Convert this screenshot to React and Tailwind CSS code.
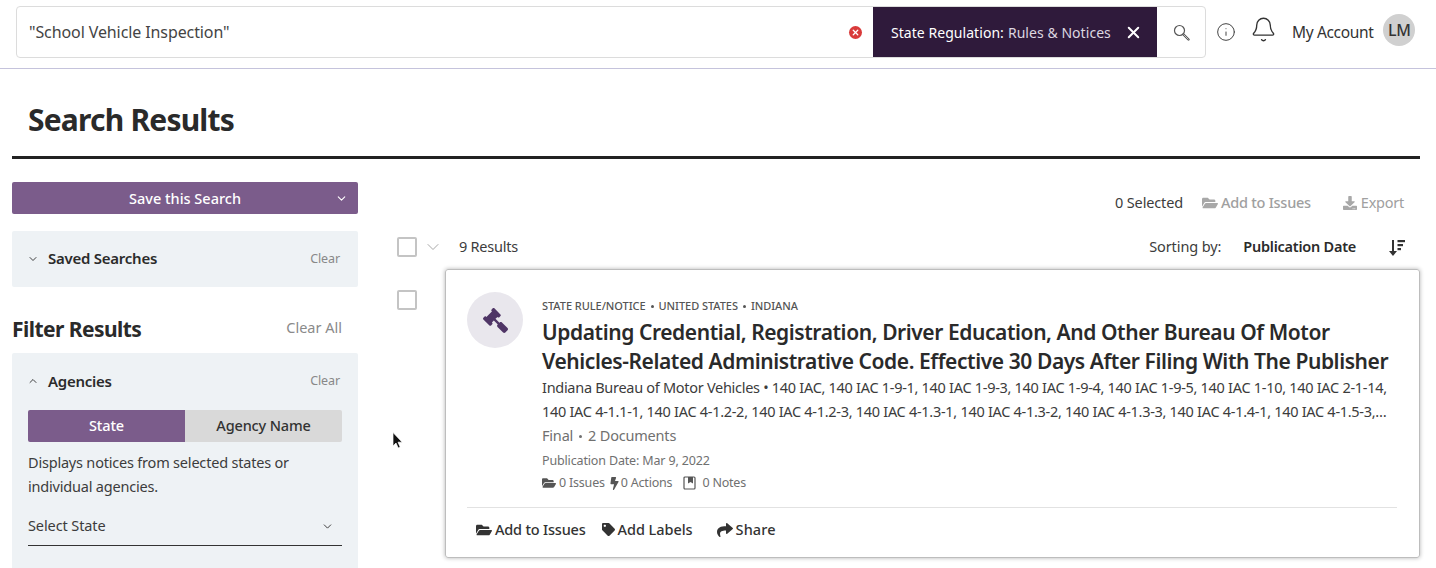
import React from "react";
import { FaFolderOpen, FaTag, FaShare, FaGavel, FaBolt, FaDownload } from "react-icons/fa";
import { ChevronDown, ChevronUp, X, Info, Bell } from "lucide-react";

function Dot() {
  return <span className="mx-[5px] inline-block h-[3px] w-[3px] rounded-full bg-[#555] align-middle" />;
}

function Check() {
  return <div className="h-[20px] w-[20px] rounded-[2px] border-2 border-[#c4c4c4] bg-white" />;
}

export default function App() {
  return (
    <div className="relative h-[568px] w-[1436px] overflow-hidden bg-white font-['Noto_Sans',sans-serif] text-[#2b2b2b]">
      <header className="flex h-[69px] items-start border-b border-[#c5c3dc] pl-4 pt-[6px]">
        <div className="flex h-[52px] w-[1190px] items-stretch overflow-hidden rounded-[4px] border border-[#dcdcdc]">
          <div className="flex flex-1 items-center pl-3 pr-[11px] text-[16px] tracking-[-0.1px] text-[#444]">
            <span className="flex-1">"School Vehicle Inspection"</span>
            <span className="flex h-[13px] w-[13px] items-center justify-center rounded-full bg-[#d93a3a]">
              <X size={9} strokeWidth={3.5} color="white" />
            </span>
          </div>
          <div className="flex w-[284px] items-center bg-[#2f1a3b] pl-[18px] text-[14px] tracking-[0.05px] text-white">
            <span>State Regulation:</span>
            <span className="ml-1 text-[#ddd6e0]">Rules &amp; Notices</span>
            <X size={19} strokeWidth={2.5} className="ml-[13px]" />
          </div>
          <div className="flex w-[48px] items-center justify-center">
            <svg width="17" height="17" viewBox="0 0 17 17" fill="none" stroke="#555">
              <circle cx="6.5" cy="6.5" r="5" strokeWidth="1.2" />
              <path d="M10.5 10.5l5 5" strokeWidth="2.4" strokeLinecap="round" />
              <path d="M10.8 10.8l4.4 4.4" stroke="#ddd" strokeWidth="0.8" strokeLinecap="round" />
            </svg>
          </div>
        </div>
        <Info size={20} strokeWidth={1.2} color="#444" className="ml-[10px] mt-[16px]" />
        <Bell size={27} strokeWidth={1.2} color="#333" className="ml-[14px] mt-[10px]" />
        <span className="ml-[15px] mt-[15px] text-[15.5px] tracking-[-0.35px] text-[#333]">My Account</span>
        <div className="ml-[10px] mt-[8px] flex h-8 w-8 items-center justify-center rounded-full bg-[#d0d0d0] text-[16px] font-medium tracking-[-0.3px] text-[#333]">LM</div>
      </header>

      <div className="pl-3 pr-4">
        <div className="border-b-[3px] border-[#222] pb-[15px] pl-4 pt-[29px]">
          <h1 className="text-[30px] font-bold leading-[43px] tracking-[-0.8px] text-[#2a2a2a]">Search Results</h1>
        </div>

        <div className="flex pt-[23px]">
          <aside className="w-[346px] shrink-0">
            <div className="relative flex h-8 items-center justify-center rounded-[2px] bg-[#7b5c8b] pt-[1px] text-[14.5px] font-medium text-white">
              Save this Search
              <ChevronDown size={13} className="absolute right-[10px]" />
            </div>
            <div className="mt-[17px] flex h-[56px] items-center rounded-[2px] bg-[#eef2f5] pb-[1px] pl-[15px] pr-[18px]">
              <ChevronDown size={12} strokeWidth={1.8} />
              <span className="ml-[9px] flex-1 text-[15px] font-semibold tracking-[-0.25px] text-[#2b2b2b]">Saved Searches</span>
              <span className="pt-[1px] text-[12.5px] tracking-[-0.1px] text-[#888]">Clear</span>
            </div>
            <div className="flex h-[66px] items-center justify-between pr-4 pt-[19px]">
              <h2 className="text-[21px] font-bold tracking-[-0.55px] text-[#2a2a2a]">Filter Results</h2>
              <span className="-mt-[4px] text-[14.5px] text-[#8a8a8a]">Clear All</span>
            </div>
            <div className="h-[300px] rounded-[2px] bg-[#eef2f5] px-4 pt-[17px]">
              <div className="flex h-[22px] items-center pr-[2px]">
                <ChevronUp size={12} strokeWidth={1.8} className="-ml-[1px]" />
                <span className="ml-[9px] flex-1 text-[15px] font-semibold tracking-[-0.25px]">Agencies</span>
                <span className="pt-[1px] text-[12.5px] tracking-[-0.1px] text-[#888]">Clear</span>
              </div>
              <div className="mt-[18px] flex h-8 overflow-hidden rounded-[2px] text-[14.5px] font-medium tracking-[-0.15px]">
                <div className="flex w-[157px] items-center justify-center bg-[#7b5c8b] text-white">State</div>
                <div className="flex flex-1 items-center justify-center bg-[#d9d9d9] text-[#333]">Agency Name</div>
              </div>
              <p className="mt-[8px] text-[14.5px] leading-6 tracking-[-0.2px] text-[#3c3c3c]">Displays notices from selected states or individual agencies.</p>
              <div className="mt-[16px] flex h-[32px] items-center justify-between border-b border-[#333] pb-[7px] pr-[8px] text-[14.5px] tracking-[-0.1px] text-[#3c3c3c]">
                Select State
                <ChevronDown size={13} strokeWidth={1.8} />
              </div>
            </div>
          </aside>

          <main className="ml-[39px] flex-1">
            <div className="mt-[11px] flex h-[20px] items-center justify-end pr-4 text-[14.5px] tracking-[-0.25px]">
              <span className="tracking-[-0.15px] text-[#3c3c3c]">0 Selected</span>
              <FaFolderOpen size={16} color="#a8a8a8" className="ml-[19px]" />
              <span className="ml-[3px] font-medium text-[#a0a0a0]">Add to Issues</span>
              <FaDownload size={14} color="#a8a8a8" className="ml-[32px]" />
              <span className="ml-[4px] text-[#a0a0a0]">Export</span>
            </div>
            <div className="mt-[21px] flex h-[26px] items-center pr-4">
              <Check />
              <ChevronDown size={20} strokeWidth={1.2} color="#a8a8a8" className="ml-[6px]" />
              <span className="ml-[16px] flex-1 text-[14.5px] tracking-[-0.25px] text-[#3c3c3c]">9 Results</span>
              <span className="text-[14.5px] tracking-[-0.1px] text-[#3c3c3c]">Sorting by:</span>
              <span className="ml-[22px] text-[14.5px] font-semibold tracking-[-0.25px] text-[#2b2b2b]">Publication Date</span>
              <svg width="16" height="17" viewBox="0 0 16 17" className="ml-[33px] mr-[-1px]" fill="#333">
                <path d="M3 1h2v11h3l-4 5-4-5h3z" />
                <rect x="8.5" y="1" width="7.5" height="2.2" />
                <rect x="8.5" y="5" width="5.5" height="2.2" />
                <rect x="8.5" y="9" width="3.5" height="2.2" />
              </svg>
            </div>
            <div className="mt-[9px] flex">
              <div className="pt-[21px]">
                <Check />
              </div>
              <article className="ml-[28px] h-[289px] flex-1 rounded-[3px] border border-[#bdbdbd] pl-[21px] pr-[22px] pt-[22px] shadow-[0_0_4px_rgba(0,0,0,0.3)]">
                <div className="flex">
                  <div className="flex h-[56px] w-[56px] shrink-0 items-center justify-center rounded-full bg-[#e9e7ed]">
                    <FaGavel size={25} color="#4f3566" className="-scale-x-100" />
                  </div>
                  <div className="ml-[19px] min-w-0 flex-1">
                    <div className="mt-[5px] flex h-[18px] items-center text-[11px] font-medium tracking-[-0.05px] text-[#555]">
                      STATE RULE/NOTICE<Dot />UNITED STATES<Dot />INDIANA
                    </div>
                    <h3 className="mt-[3px] text-[21px] font-semibold leading-[29px] tracking-[-0.42px] text-[#2a2a2a]">
                      Updating Credential, Registration, Driver Education, And Other Bureau Of Motor Vehicles-Related Administrative Code. Effective 30 Days After Filing With The Publisher
                    </h3>
                    <p className="-mt-[1px] text-[14.5px] leading-6 tracking-[-0.29px] text-[#3c3c3c]">
                      Indiana Bureau of Motor Vehicles • 140 IAC, 140 IAC 1-9-1, 140 IAC 1-9-3, 140 IAC 1-9-4, 140 IAC 1-9-5, 140 IAC 1-10, 140 IAC 2-1-14, 140 IAC 4-1.1-1, 140 IAC 4-1.2-2, 140 IAC 4-1.2-3, 140 IAC 4-1.3-1, 140 IAC 4-1.3-2, 140 IAC 4-1.3-3, 140 IAC 4-1.4-1, 140 IAC 4-1.5-3,…
                    </p>
                    <div className="mt-[1px] flex h-6 items-center text-[14.5px] tracking-[-0.2px] text-[#707070]">
                      Final<span className="mx-[6px] inline-block h-[3px] w-[3px] rounded-full bg-[#707070]" />2 Documents
                    </div>
                    <div className="mt-[1px] flex h-[24px] items-center text-[12.5px] tracking-[-0.15px] text-[#707070]">Publication Date: Mar 9, 2022</div>
                    <div className="flex h-[20px] items-center text-[12.5px] tracking-[-0.2px] text-[#707070]">
                      <FaFolderOpen size={14} color="#555" />
                      <span className="ml-[3px]">0 Issues</span>
                      <FaBolt size={13} color="#555" className="ml-[3px]" />
                      <span>0 Actions</span>
                      <svg width="13" height="14" viewBox="0 0 13 14" className="ml-[11px]" fill="none" stroke="#555" strokeWidth="1.2">
                        <rect x="1" y="1" width="11" height="12" rx="1" />
                        <path d="M5 1h5v6.5L7.5 6 5 7.5z" fill="#555" stroke="none" />
                      </svg>
                      <span className="ml-[6px]">0 Notes</span>
                    </div>
                  </div>
                </div>
                <div className="mt-[14px] flex h-[44px] items-center border-t border-[#e2e2e2] pl-[9px] text-[14.5px] font-medium tracking-[-0.2px] text-[#333]">
                  <FaFolderOpen size={16} color="#333" />
                  <span className="ml-[3px]">Add to Issues</span>
                  <FaTag size={13} color="#333" className="ml-4" />
                  <span className="ml-[3px] tracking-[-0.05px]">Add Labels</span>
                  <FaShare size={16} color="#333" className="ml-6" />
                  <span className="ml-[3px] tracking-[0.1px]">Share</span>
                </div>
              </article>
            </div>
          </main>
        </div>
      </div>

      <svg width="12" height="18" viewBox="0 0 12 18" className="absolute left-[392px] top-[432px]">
        <path d="M1 0.5v13.5l3-3 2.2 5 2-1-2.2-4.8h4.2z" fill="#111" stroke="white" strokeWidth="0.7" />
      </svg>
    </div>
  );
}
